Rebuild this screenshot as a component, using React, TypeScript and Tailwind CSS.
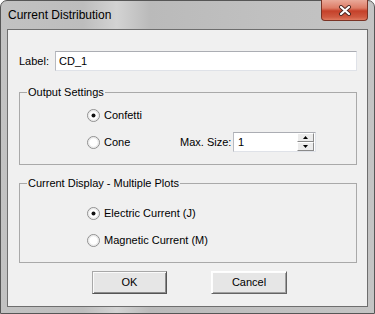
import React from "react";

type RadioProps = { checked?: boolean };

const Radio = ({ checked }: RadioProps) => (
  <svg width="13" height="13" viewBox="0 0 13 13" className="shrink-0">
    <circle cx="6.5" cy="6.5" r="6" fill="#f4f4f4" stroke="#8f8f8f" />
    <circle cx="6.5" cy="6.5" r="4.8" fill="#ffffff" stroke="#e2e2e2" />
    {checked && <circle cx="6.5" cy="6.5" r="2" fill="#111" />}
  </svg>
);

const RadioRow = ({ checked, label }: RadioProps & { label: string }) => (
  <div className="flex h-[13px] items-center gap-[4px]">
    <Radio checked={checked} />
    <span className="leading-[13px]">{label}</span>
  </div>
);

const Legend = ({ children }: { children: React.ReactNode }) => (
  <div className="-mt-[7px] ml-[7px] w-fit bg-[#f0f0f0] px-[1px] leading-[13px]">{children}</div>
);

const SpinButton = ({ up }: { up?: boolean }) => (
  <div className="flex h-[9px] w-[17px] items-center justify-center border border-t-white border-l-white border-b-[#8a8a8a] border-r-[#8a8a8a] bg-[#ececec]">
    <svg width="5" height="3" viewBox="0 0 5 3">
      <path d={up ? "M0 3 L2.5 0 L5 3 Z" : "M0 0 L2.5 3 L5 0 Z"} fill="#000" />
    </svg>
  </div>
);

const CloseButton = () => (
  <div className="-mt-[1px] flex h-[21px] w-[47px] items-center justify-center rounded-b-[4px] border border-t-0 border-[#7a3325] bg-[linear-gradient(180deg,#e9a999_0%,#dd7c66_40%,#c5412a_55%,#cf5a41_85%,#e07a60_100%)]">
    <svg width="14" height="11" viewBox="0 0 14 11">
      <path d="M3 2 L11 9 M11 2 L3 9" stroke="#4b2620" strokeWidth="4" strokeLinecap="round" />
      <path d="M3 2 L11 9 M11 2 L3 9" stroke="#ffffff" strokeWidth="2.2" strokeLinecap="round" />
    </svg>
  </div>
);

const DialogButton = ({ label, primary }: { label: string; primary?: boolean }) => (
  <button
    className={
      primary
        ? "flex h-[23px] w-[75px] items-center justify-center border border-t-[#a8a8a8] border-l-[#a8a8a8] border-b-[#555] border-r-[#555] bg-[#e6e6e6] shadow-[inset_1px_1px_0_#fafafa,inset_-1px_-1px_0_#8c8c8c]"
        : "flex h-[23px] w-[76px] items-center justify-center border border-t-white border-l-white border-b-[#646464] border-r-[#646464] bg-[#e6e6e6] shadow-[inset_1px_1px_0_#fdfdfd,inset_-1px_-1px_0_#a0a0a0]"
    }
  >
    {label}
  </button>
);

export default function App() {
  return (
    <div className="flex h-[314px] w-[375px] flex-col rounded-t-[7px] border border-[#565656] bg-[linear-gradient(90deg,#c2c2c2_0%,#bdbdbd_22%,#d3d3d3_31%,#bababa_40%,#c0c0c0_70%,#c4c4c4_100%)] px-[6px] pb-[6px] font-['Liberation_Sans',Arial,sans-serif] text-[11px] text-black">
      <div className="flex h-[28px] shrink-0 items-start justify-between">
        <span className="pl-[1px] pt-[6px] text-[12px] leading-[16px]">Current Distribution</span>
        <CloseButton />
      </div>

      <div className="flex flex-1 flex-col border border-[#6e6e6e] bg-[#f0f0f0] pl-[11px]">
        <div className="mt-[21px] flex items-center">
          <span className="w-[36px]">Label:</span>
          <div className="flex h-[20px] w-[302px] items-center border border-[#dfe2e8] border-t-[#abadb3] border-l-[#b8bac0] bg-white pl-[3px]">
            CD_1
          </div>
        </div>

        <div className="mt-[21px] flex h-[73px] w-[338px] flex-col border border-[#a9a9a9]">
          <Legend>Output Settings</Legend>
          <div className="ml-[67px] mt-[10px]">
            <RadioRow checked label="Confetti" />
          </div>
          <div className="ml-[67px] mt-[10px] flex h-[20px] items-center">
            <div className="w-[93px]">
              <RadioRow label="Cone" />
            </div>
            <span className="w-[53px]">Max. Size:</span>
            <div className="flex h-[20px] w-[83px] items-center justify-between border border-[#dfe2e8] border-t-[#abadb3] border-l-[#b8bac0] bg-white pl-[4px] pr-[1px]">
              <span>1</span>
              <div className="flex flex-col">
                <SpinButton up />
                <SpinButton />
              </div>
            </div>
          </div>
        </div>

        <div className="mt-[18px] flex h-[80px] w-[338px] flex-col border border-[#a9a9a9]">
          <Legend>Current Display - Multiple Plots</Legend>
          <div className="ml-[67px] mt-[17px]">
            <RadioRow checked label="Electric Current (J)" />
          </div>
          <div className="ml-[67px] mt-[14px]">
            <RadioRow label="Magnetic Current (M)" />
          </div>
        </div>

        <div className="mt-[8px] flex">
          <div className="ml-[73px]">
            <DialogButton primary label="OK" />
          </div>
          <div className="ml-[44px]">
            <DialogButton label="Cancel" />
          </div>
        </div>
      </div>
    </div>
  );
}
